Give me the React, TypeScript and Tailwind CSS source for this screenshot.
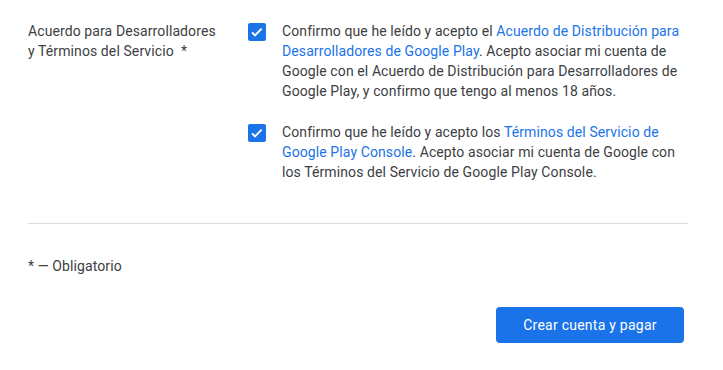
export default function App() {
  return (
    <div className="h-[370px] w-[723px] bg-white pl-[28px] pr-[35px] pt-[21px] font-['Roboto',sans-serif] text-[14px] leading-[20px] tracking-[0.1px] text-[#3c4043]">
      <div className="flex">
        <div className="w-[220px] shrink-0">
          <div className="w-[196px]">Acuerdo para Desarrolladores y Términos del Servicio&nbsp; *</div>
        </div>
        <div className="flex flex-1 flex-col gap-[21px]">
          <CheckRow>
            Confirmo que he leído y acepto el{" "}
            <a className="text-[#1a73e8]">Acuerdo de Distribución para Desarrolladores de Google Play</a>. Acepto
            asociar mi cuenta de Google con el Acuerdo de Distribución para Desarrolladores de Google Play, y confirmo
            que tengo al menos 18 años.
          </CheckRow>
          <CheckRow>
            Confirmo que he leído y acepto los{" "}
            <a className="text-[#1a73e8]">Términos del Servicio de Google Play Console</a>. Acepto asociar mi cuenta de
            Google con los Términos del Servicio de Google Play Console.
          </CheckRow>
        </div>
      </div>

      <div className="mt-[41px] h-px bg-[#dadce0]" />

      <div className="mt-[32px]">* — Obligatorio</div>

      <div className="mt-[31px] flex justify-end pr-[4px]">
        <button className="h-[36px] w-[188px] rounded-[4px] bg-[#1a73e8] text-[14px] tracking-[0.25px] text-white">
          Crear cuenta y pagar
        </button>
      </div>
    </div>
  );
}

function CheckRow({ children }: { children: React.ReactNode }) {
  return (
    <div className="flex gap-[16px]">
      <span className="mt-[2px] flex h-[18px] w-[18px] shrink-0 items-center justify-center rounded-[2px] bg-[#1a73e8]">
        <svg viewBox="0 0 24 24" className="h-[16px] w-[16px]" fill="none" stroke="white" strokeWidth="3">
          <path d="M4.5 12.5l4.5 4.5 10-10" />
        </svg>
      </span>
      <p className="flex-1">{children}</p>
    </div>
  );
}
